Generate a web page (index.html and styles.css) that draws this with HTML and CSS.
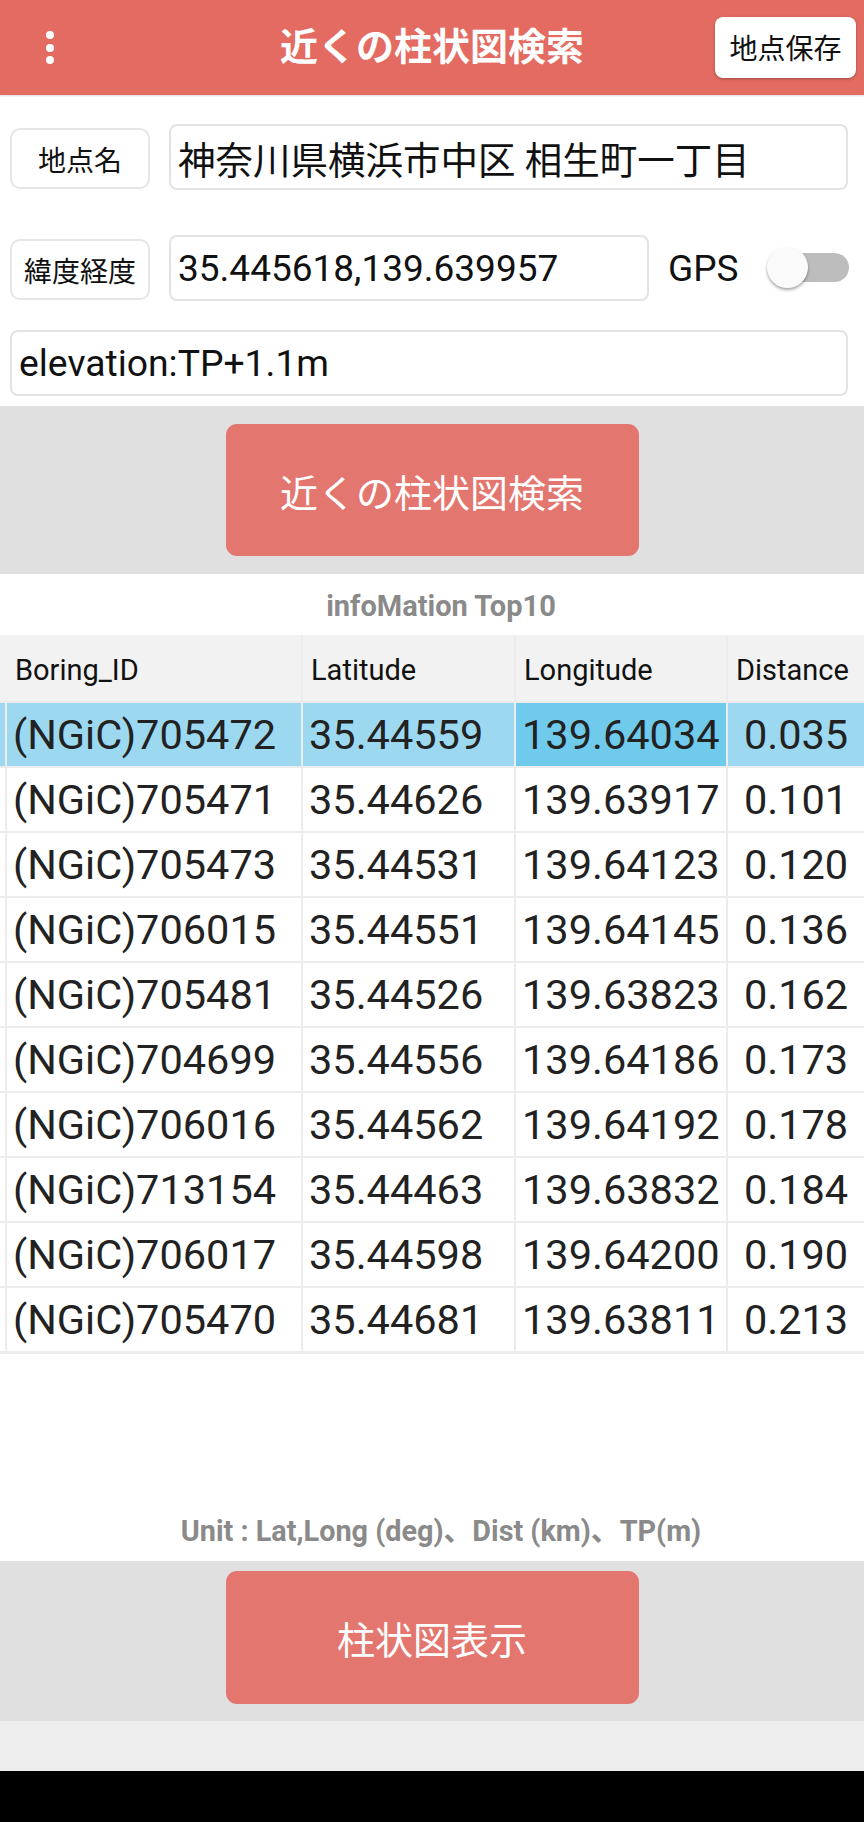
FILE: index.html
```html
<!DOCTYPE html>
<html lang="ja">
<head>
<meta charset="utf-8">
<title>近くの柱状図検索</title>
<link rel="stylesheet" href="styles.css">
</head>
<body>
<div class="app">
  <header class="topbar">
    <div class="menu"><span class="dot"></span><span class="dot"></span><span class="dot"></span></div>
    <h1 class="title">近くの柱状図検索</h1>
    <div class="save-wrap"><button class="save">地点保存</button></div>
  </header>

  <section class="form">
    <div class="row row-name">
      <div class="label">地点名</div>
      <div class="field field-name">神奈川県横浜市中区 相生町一丁目</div>
    </div>
    <div class="row row-coord">
      <div class="label">緯度経度</div>
      <div class="field field-coord">35.445618,139.639957</div>
      <span class="gps">GPS</span>
      <span class="toggle"><span class="track"></span><span class="knob"></span></span>
    </div>
    <div class="row row-elev">
      <div class="field field-elev">elevation:TP+1.1m</div>
    </div>
  </section>

  <section class="action action-top">
    <button class="btn-main">近くの柱状図検索</button>
  </section>

  <div class="info-title">infoMation Top10</div>

  <div class="grid">
    <div class="hd hd-first">Boring_ID</div><div class="hd">Latitude</div><div class="hd">Longitude</div><div class="hd">Distance</div>

    <div class="c0 sel"></div><div class="cell sel">(NGiC)705472</div><div class="cell sel">35.44559</div><div class="cell sel sel-focus">139.64034</div><div class="cell dist sel">0.035</div>
    <div class="c0"></div><div class="cell">(NGiC)705471</div><div class="cell">35.44626</div><div class="cell">139.63917</div><div class="cell dist">0.101</div>
    <div class="c0"></div><div class="cell">(NGiC)705473</div><div class="cell">35.44531</div><div class="cell">139.64123</div><div class="cell dist">0.120</div>
    <div class="c0"></div><div class="cell">(NGiC)706015</div><div class="cell">35.44551</div><div class="cell">139.64145</div><div class="cell dist">0.136</div>
    <div class="c0"></div><div class="cell">(NGiC)705481</div><div class="cell">35.44526</div><div class="cell">139.63823</div><div class="cell dist">0.162</div>
    <div class="c0"></div><div class="cell">(NGiC)704699</div><div class="cell">35.44556</div><div class="cell">139.64186</div><div class="cell dist">0.173</div>
    <div class="c0"></div><div class="cell">(NGiC)706016</div><div class="cell">35.44562</div><div class="cell">139.64192</div><div class="cell dist">0.178</div>
    <div class="c0"></div><div class="cell">(NGiC)713154</div><div class="cell">35.44463</div><div class="cell">139.63832</div><div class="cell dist">0.184</div>
    <div class="c0"></div><div class="cell">(NGiC)706017</div><div class="cell">35.44598</div><div class="cell">139.64200</div><div class="cell dist">0.190</div>
    <div class="c0"></div><div class="cell">(NGiC)705470</div><div class="cell">35.44681</div><div class="cell">139.63811</div><div class="cell dist">0.213</div>
  </div>

  <div class="spacer">
    <p class="unit">Unit : Lat,Long (deg)、Dist (km)、TP(m)</p>
  </div>

  <section class="action action-bottom">
    <button class="btn-main">柱状図表示</button>
  </section>

  <div class="strip"></div>
  <div class="navbar"></div>
</div>
</body>
</html>
```

FILE: styles.css
```css
* { box-sizing: border-box; }

html, body {
  margin: 0;
  padding: 0;
  background: #ffffff;
}

body {
  font-family: "Roboto", "Noto Sans CJK JP", sans-serif;
  color: #1e1e1e;
}

.app {
  width: 864px;
  height: 1822px;
  overflow: hidden;
  display: flex;
  flex-direction: column;
}

/* ---------- top bar ---------- */
.topbar {
  height: 95px;
  flex: 0 0 95px;
  background: #e36b61;
  display: grid;
  grid-template-columns: 1fr auto 1fr;
  align-items: center;
  box-shadow: 0 1px 2px rgba(0,0,0,0.15);
  position: relative;
  z-index: 1;
}

.menu {
  display: flex;
  flex-direction: column;
  gap: 4.5px;
  margin-left: 46px;
  width: 8px;
}

.dot {
  width: 8px;
  height: 8px;
  border-radius: 50%;
  background: #ffffff;
}

.title {
  margin: 0;
  font-size: 38px;
  font-weight: 700;
  color: #ffffff;
  line-height: 1;
  padding-bottom: 2px;
}

.save-wrap {
  display: flex;
  justify-content: flex-end;
  padding-right: 8px;
}

.save {
  width: 141px;
  height: 61px;
  margin-top: -1px;
  border: none;
  border-radius: 8px;
  background: #ffffff;
  box-shadow: 0 1px 3px rgba(0,0,0,0.3);
  font-family: "Roboto", "Noto Sans CJK JP", sans-serif;
  font-size: 28px;
  color: #111;
  padding: 0;
}

/* ---------- form ---------- */
.form {
  height: 311px;
  flex: 0 0 311px;
  padding-top: 29px;
  display: flex;
  flex-direction: column;
}

.row {
  display: flex;
  align-items: center;
  height: 66px;
  padding-left: 10px;
}

.row-coord { margin-top: 45px; }
.row-elev { margin-top: 29px; }

.label {
  width: 140px;
  height: 61px;
  border: 2px solid #e6e6e6;
  border-radius: 10px;
  display: flex;
  align-items: center;
  justify-content: center;
  font-size: 28px;
  color: #111;
  margin-right: 19px;
  margin-top: 3px;
}

.field {
  height: 66px;
  border: 2px solid #e3e3e3;
  border-radius: 8px;
  display: flex;
  align-items: center;
  padding-left: 7px;
  font-size: 37px;
  color: #111;
  white-space: nowrap;
}

.field-name { width: 679px; font-size: 37.5px; }
.field-coord { width: 480px; }
.field-elev { width: 838px; font-size: 37.3px; }

.gps {
  margin-left: 19px;
  font-size: 37px;
  color: #111;
}

.toggle {
  position: relative;
  width: 83px;
  height: 42px;
  margin-left: 28px;
}

.track {
  position: absolute;
  left: 1px;
  top: 6px;
  width: 81px;
  height: 29px;
  border-radius: 15px;
  background: #bdbdbd;
}

.knob {
  position: absolute;
  left: 0;
  top: 0;
  width: 41px;
  height: 41px;
  border-radius: 50%;
  background: #fafafa;
  box-shadow: 0 2px 3px rgba(0,0,0,0.35);
}

/* ---------- action sections ---------- */
.action {
  background: #e0e0e0;
  display: flex;
  justify-content: center;
}

.action-top {
  height: 168px;
  flex: 0 0 168px;
  padding-top: 18px;
}

.action-bottom {
  height: 160px;
  flex: 0 0 160px;
  padding-top: 10px;
}

.btn-main {
  width: 413px;
  height: 132px;
  border: none;
  border-radius: 11px;
  background: #e37770;
  color: #ffffff;
  font-family: "Roboto", "Noto Sans CJK JP", sans-serif;
  font-size: 38px;
  padding: 0;
}

.action-bottom .btn-main { height: 133px; }

/* ---------- info title ---------- */
.info-title {
  height: 61px;
  flex: 0 0 61px;
  display: flex;
  align-items: center;
  justify-content: center;
  font-size: 29px;
  font-weight: 700;
  color: #8a8a8a;
  padding-top: 3px;
  padding-left: 18px;
}

/* ---------- table ---------- */
.grid {
  height: 719px;
  flex: 0 0 719px;
  display: grid;
  grid-template-columns: 5px 294px 211px 210px 136px;
  grid-template-rows: 66px repeat(10, 63px);
  column-gap: 2px;
  row-gap: 2px;
  background: #ececec;
  padding-bottom: 3px;
}

.hd {
  background: #f2f2f2;
  display: flex;
  align-items: center;
  padding-left: 8px;
  padding-top: 3px;
  font-size: 29px;
  color: #111;
}

.hd-first {
  grid-column: span 2;
  padding-left: 15px;
}

.c0 { background: #ffffff; }

.cell {
  background: #ffffff;
  display: flex;
  align-items: center;
  padding-left: 6px;
  font-size: 41.5px;
  color: #222;
  white-space: nowrap;
}

.cell.dist { justify-content: center; padding-left: 0; }

.sel { background: #9cd9f1; }
.sel-focus { background: #6fcaec; }

/* ---------- bottom ---------- */
.spacer {
  height: 207px;
  flex: 0 0 207px;
  display: flex;
  flex-direction: column;
  justify-content: flex-end;
  align-items: center;
  padding-bottom: 13px;
  padding-left: 18px;
}

.unit {
  margin: 0;
  font-size: 28.8px;
  font-weight: 700;
  color: #8a8a8a;
  line-height: 34px;
}

.strip {
  height: 50px;
  flex: 0 0 50px;
  background: #eeeeee;
}

.navbar {
  height: 51px;
  flex: 0 0 51px;
  background: #000000;
}
```
